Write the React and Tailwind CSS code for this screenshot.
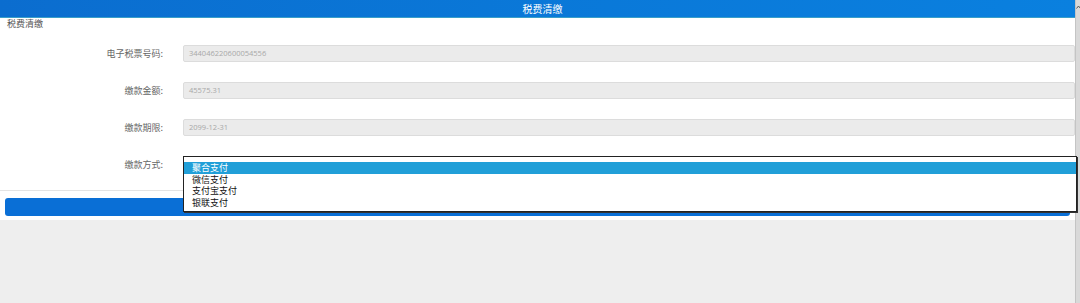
import React from "react";

const font = { fontFamily: '"Noto Sans CJK SC", "Noto Sans", sans-serif' };

function Field({ label, value }) {
  return (
    <div className="flex items-center h-[17px]">
      <div className="w-[165px] text-right text-[9px] text-[#666] pr-[2px] leading-none">{label}</div>
      <div className="ml-[18px] flex-1 h-[17px] bg-[#ebebeb] border border-[#dcdcdc] rounded-[2px] flex items-center pl-[5px]">
        <span className="text-[7.5px] text-[#a8a8a8] leading-none" style={{ fontFamily: '"Open Sans", "Liberation Sans", sans-serif' }}>{value}</span>
      </div>
    </div>
  );
}

export default function App() {
  const options = ["聚合支付", "微信支付", "支付宝支付", "银联支付"];
  return (
    <div className="w-[1080px] h-[303px] flex bg-[#eeeeee] overflow-hidden" style={font}>
      <div className="w-[1075px] flex flex-col">
        <div className="h-[18px] bg-gradient-to-r from-[#0b6dcf] via-[#0a78d8] to-[#0a80df] border-b border-[#3a9fc8] flex items-center justify-center">
          <span className="text-[10px] text-white leading-none ml-[10px]">税费清缴</span>
        </div>
        <div className="bg-white flex flex-col">
          <div className="h-[12px] pl-[7px] pt-[1px]">
            <div className="text-[9px] text-[#555] leading-[10px]">税费清缴</div>
          </div>
          <div className="flex flex-col gap-[20px] pt-[15px]">
            <Field label="电子税票号码:" value="344046220600054556" />
            <Field label="缴款金额:" value="45575.31" />
            <Field label="缴款期限:" value="2099-12-31" />
            <div className="flex items-center h-[17px] relative">
              <div className="w-[165px] text-right text-[9px] text-[#666] pr-[2px] leading-none">缴款方式:</div>
              <div className="ml-[18px] flex-1 h-[17px] relative">
                <div className="absolute left-0 top-0 w-[894px] bg-white border border-[#222] shadow-[1px_1px_0_#333] pt-[5px] pb-[3px] z-10">
                  {options.map((o, i) => (
                    <div
                      key={o}
                      className={
                        "h-[11.5px] pl-[8px] text-[9px] leading-[11.5px] " +
                        (i === 0 ? "bg-[#219fd8] text-white" : "text-[#111]")
                      }
                    >
                      {o}
                    </div>
                  ))}
                </div>
              </div>
            </div>
          </div>
          <div className="h-[18px] border-b border-[#e4e4e4]"></div>
          <div className="px-[5px] pt-[7px] pb-[4px]">
            <div className="h-[18px] bg-[#0a6fd6] rounded-[3px]"></div>
          </div>
        </div>
        <div className="flex-1 bg-[#eeeeee]"></div>
      </div>
      <div className="w-[5px] bg-[#d9d9d9] border-l border-[#c4c4c4] flex flex-col items-center pt-[5px]">
        <svg width="5" height="4" viewBox="0 0 5 4">
          <path d="M0.5 3.5 L2.5 1 L4.5 3.5" stroke="#555" strokeWidth="1" fill="none" />
        </svg>
      </div>
    </div>
  );
}
